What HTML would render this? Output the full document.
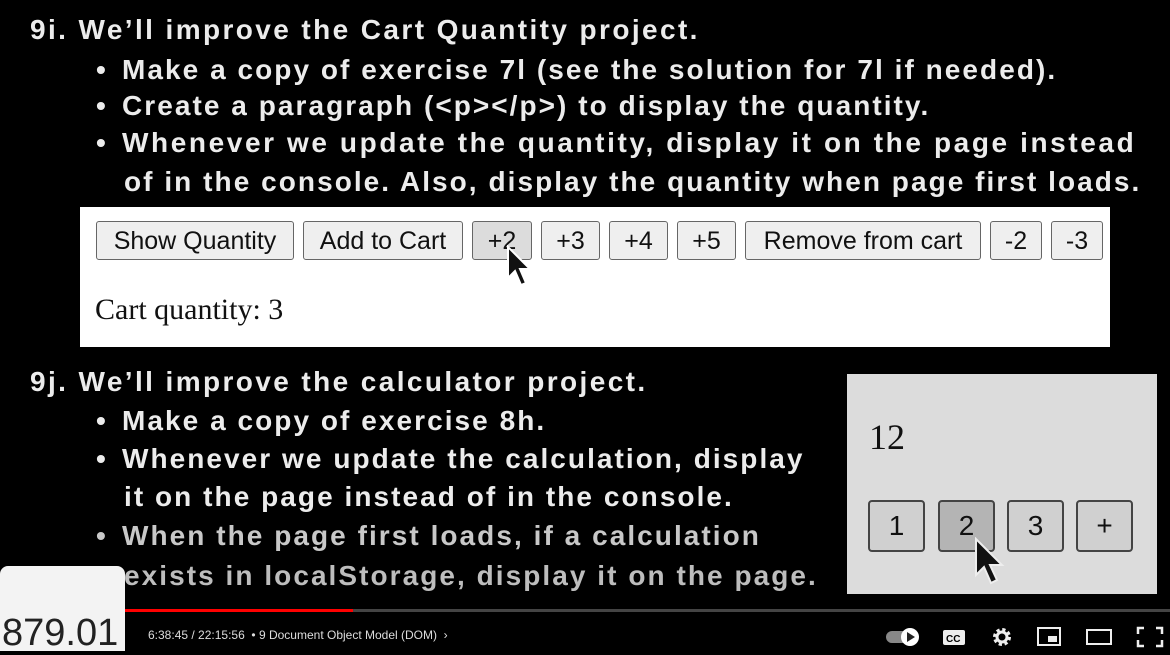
<!DOCTYPE html>
<html><head><meta charset="utf-8"><style>
body{margin:0;width:1170px;height:651px;background:#000;overflow:hidden;position:relative;font-family:"Liberation Sans",sans-serif}
.t{position:absolute;color:#ececec;font-size:28px;font-weight:bold;white-space:nowrap;letter-spacing:2.05px}
.b{position:absolute;color:#ececec;font-size:28px;font-weight:bold}
.box{position:absolute;background:#fff}
.btn{position:absolute;top:14px;height:39px;border:1px solid #666;border-radius:3px;background:#efefef;font-size:25px;color:#111;text-align:center;line-height:39px;box-sizing:border-box}
.cb{position:absolute;top:126px;width:57px;height:52px;border:2px solid #444;border-radius:4px;background:#d0d0d0;font-size:28px;text-align:center;line-height:48px;box-sizing:border-box;color:#111}
</style></head><body>
<div class="t" style="left:30px;top:14px;letter-spacing:2.4px">9i. We’ll improve the Cart Quantity project.</div>
<div class="b" style="left:96px;top:54px">•</div><div class="t" style="left:122px;top:54px">Make a copy of exercise 7l (see the solution for 7l if needed).</div>
<div class="b" style="left:96px;top:90px">•</div><div class="t" style="left:122px;top:90px">Create a paragraph (&lt;p&gt;&lt;/p&gt;) to display the quantity.</div>
<div class="b" style="left:96px;top:127px">•</div><div class="t" style="left:122px;top:127px;letter-spacing:2.6px">Whenever we update the quantity, display it on the page instead</div>
<div class="t" style="left:124px;top:166px">of in the console. Also, display the quantity when page first loads.</div>
<div class="box" style="left:80px;top:207px;width:1030px;height:140px">
<div class="btn" style="left:16px;width:198px">Show Quantity</div>
<div class="btn" style="left:223px;width:160px">Add to Cart</div>
<div class="btn" style="left:392px;width:60px;background:#dcdcdc">+2</div>
<div class="btn" style="left:461px;width:59px">+3</div>
<div class="btn" style="left:529px;width:59px">+4</div>
<div class="btn" style="left:597px;width:59px">+5</div>
<div class="btn" style="left:665px;width:236px">Remove from cart</div>
<div class="btn" style="left:910px;width:52px">-2</div>
<div class="btn" style="left:971px;width:52px">-3</div>
<div style="position:absolute;left:15px;top:86px;font-family:'Liberation Serif',serif;font-size:30px;color:#111">Cart quantity: 3</div>
<svg style="position:absolute;left:425px;top:38px" width="30" height="44" viewBox="0 0 30 44"><path d="M3 2 L3 33 L10 26 L16 40 L21 38 L15 24 L25 24 Z" fill="#111" stroke="#fff" stroke-width="2"/></svg>
</div>
<div class="t" style="left:30px;top:366px;letter-spacing:2.4px">9j. We’ll improve the calculator project.</div>
<div class="b" style="left:96px;top:405px">•</div><div class="t" style="left:122px;top:405px">Make a copy of exercise 8h.</div>
<div class="b" style="left:96px;top:443px">•</div><div class="t" style="left:122px;top:443px">Whenever we update the calculation, display</div>
<div class="t" style="left:124px;top:481px">it on the page instead of in the console.</div>
<div class="b" style="left:96px;top:520px;color:#c8c8c8">•</div><div class="t" style="left:122px;top:520px;color:#c8c8c8">When the page first loads, if a calculation</div>
<div class="t" style="left:124px;top:560px;color:#bdbdbd">exists in localStorage, display it on the page.</div>
<div class="box" style="left:847px;top:374px;width:310px;height:220px;background:#dcdcdc">
<div style="position:absolute;left:22px;top:42px;font-family:'Liberation Serif',serif;font-size:36px;color:#111">12</div>
<div class="cb" style="left:21px">1</div>
<div class="cb" style="left:91px;background:#b4b4b4">2</div>
<div class="cb" style="left:160px">3</div>
<div class="cb" style="left:229px">+</div>
<svg style="position:absolute;left:126px;top:163px" width="34" height="50" viewBox="0 0 34 50"><path d="M3 2 L3 38 L11 30 L18 46 L24 43 L17 28 L29 28 Z" fill="#111" stroke="#eee" stroke-width="2"/></svg>
</div>
<div style="position:absolute;left:0;top:566px;width:125px;height:85px;background:#f3f3f3;border-radius:8px 8px 0 0"></div>
<div style="position:absolute;left:2px;top:612px;font-size:38px;color:#222">879.01</div>
<div style="position:absolute;left:125px;top:609px;width:1045px;height:3px;background:#444"></div>
<div style="position:absolute;left:125px;top:609px;width:228px;height:3px;background:#f00"></div>
<div style="position:absolute;left:148px;top:628px;font-size:12px;color:#ddd">6:38:45 / 22:15:56 &nbsp;• 9 Document Object Model (DOM) &nbsp;›</div>
<svg style="position:absolute;left:880px;top:624px" width="290" height="26" viewBox="0 0 290 26">
<rect x="6" y="7" width="26" height="12" rx="6" fill="#888"/><circle cx="30" cy="13" r="9" fill="#fff"/><path d="M27 8 L35 13 L27 18Z" fill="#222"/>
<rect x="63" y="6" width="22" height="15" rx="2" fill="#eee"/><text x="66" y="18" font-size="10" font-weight="bold" fill="#000" font-family="Liberation Sans">CC</text>
<circle cx="122" cy="13" r="7" fill="none" stroke="#eee" stroke-width="4" stroke-dasharray="3 2.5"/><circle cx="122" cy="13" r="5" fill="none" stroke="#eee" stroke-width="3"/>
<rect x="158" y="4" width="22" height="17" fill="none" stroke="#eee" stroke-width="2"/><rect x="168" y="12" width="9" height="6" fill="#eee"/>
<rect x="207" y="6" width="24" height="14" fill="none" stroke="#eee" stroke-width="2"/>
<path d="M258 10V4h6M276 4h6v6M282 16v6h-6M264 22h-6v-6" fill="none" stroke="#eee" stroke-width="2.5"/>
</svg>
</body></html>
